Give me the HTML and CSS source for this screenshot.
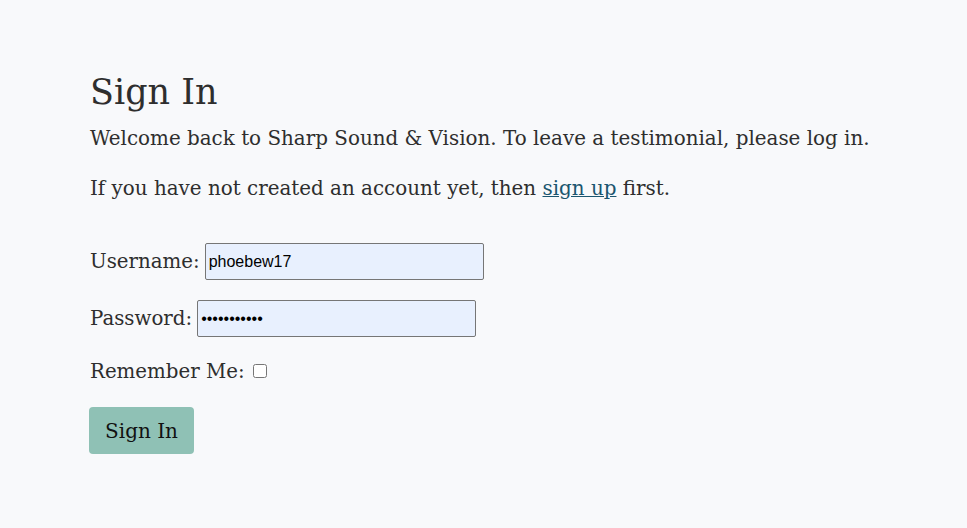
FILE: index.html
```html
<!DOCTYPE html>
<html lang="en">
<head>
<meta charset="utf-8">
<title>Sign In</title>
<link rel="stylesheet" href="styles.css">
</head>
<body>
<main class="page">
  <h1 class="title">Sign In</h1>
  <p class="lead">Welcome back to Sharp Sound &amp; Vision. To leave a testimonial, please log in.</p>
  <p class="lead second">If you have not created an account yet, then <a class="link" href="#">sign up</a> first.</p>
  <form class="form">
    <p class="row"><label class="label">Username:</label> <input class="field" type="text" value="phoebew17"></p>
    <p class="row"><label class="label">Password:</label> <input class="field" type="password" value="phoebew1711"></p>
    <p class="row short"><label class="label">Remember Me:</label> <input class="check" type="checkbox"></p>
    <button class="btn" type="button">Sign In</button>
  </form>
</main>
</body>
</html>
```

FILE: styles.css
```css
html, body {
  margin: 0;
  padding: 0;
  background: #f8f9fb;
}
body {
  font-family: "DejaVu Serif", "Liberation Serif", serif;
  color: #2e2e2e;
}
.page {
  padding: 70px 0 0 90px;
}
.title {
  font-size: 35px;
  font-weight: 400;
  margin: 0;
  line-height: 44px;
}
.lead {
  font-size: 19.9px;
  line-height: 28px;
  margin: 11px 0 0;
}
.lead.second {
  margin-top: 22px;
}
.link {
  color: #1b566f;
}
.form {
  margin-top: 40px;
}
.row {
  font-size: 19.8px;
  margin: 0 0 20px;
  display: flex;
  align-items: center;
  gap: 5px;
  height: 37px;
}
.row.short {
  height: 28px;
  gap: 8px;
}
.field {
  width: 279px;
  height: 37px;
  box-sizing: border-box;
  background: #e8f0fe;
  border: 1px solid #767676;
  border-radius: 2px;
  font-family: "Liberation Sans", Arial, sans-serif;
  font-size: 16px;
  padding: 1px 3px;
  color: #000;
}
.check {
  width: 14px;
  height: 14px;
  margin: 0;
}
.btn {
  margin: 2px 0 0 -1px;
  background: #8fc1b5;
  border: none;
  border-radius: 4px;
  font-family: inherit;
  font-size: 20px;
  color: #111;
  width: 105px;
  height: 47px;
  padding: 0;
}
```
